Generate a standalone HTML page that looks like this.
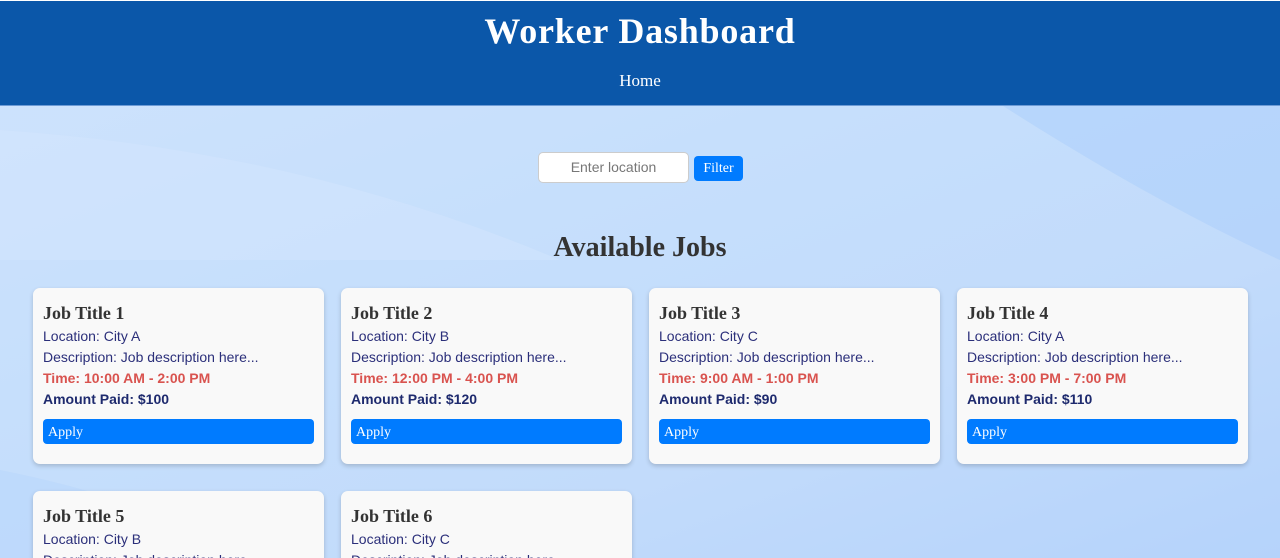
<!DOCTYPE html>
<html style="overflow:hidden;height:558px"><head><style>
body{margin:0;width:1280px;height:558px;overflow:hidden;font-family:"Liberation Serif",serif;background:linear-gradient(160deg,#cfe3fd 0%,#c6dffc 40%,#c2dbfb 70%,#b5d3fb 100%);position:relative}
.bgs{position:absolute;inset:0;z-index:0}
header{position:relative;z-index:1;background:#0b57a9;height:104px;border-top:1px solid #fff;border-bottom:1px solid #6d9bd6;text-align:center;color:#fff}
h1{margin:0;padding-top:10px;font-size:36px;letter-spacing:0.8px;line-height:40px;font-weight:bold}
.nav{position:absolute;top:70px;left:0;right:0;font-size:17px}
.filter{position:absolute;z-index:1;left:538px;top:152px}
.filter .in{position:absolute;left:0;top:0;width:151px;height:31px;background:#fff;border:1px solid #ccc;border-radius:5px;font-family:"Liberation Sans",sans-serif;font-size:14px;color:#777;text-align:center;line-height:29px;box-sizing:border-box}
.filter .btn{position:absolute;left:156px;top:4px;width:49px;height:25px;background:#007bff;border-radius:4px;color:#fff;font-size:14px;text-align:center;line-height:26px}
h2{position:absolute;z-index:1;top:231px;left:0;right:0;margin:0;text-align:center;font-size:28px;line-height:34px;color:#333}
.card{position:absolute;z-index:1;width:291px;height:176px;background:#f9f9f9;border-radius:7px;box-shadow:0 2px 5px rgba(0,0,0,.18);box-sizing:border-box;padding:0 10px}
.card h3{margin:14px 0 0;font-size:18px;line-height:22px;color:#333}
.card p{margin:0;font-family:"Liberation Sans",sans-serif;font-size:14px;line-height:21px;color:#2b2f7a}
.card p.loc{margin-top:2px}
.card .t{color:#d9534f;font-weight:bold}
.card .a{color:#1e2a6e;font-weight:bold}
.card .ap{margin-top:9px;height:25px;background:#007bff;border-radius:4px;color:#fff;font-size:14px;line-height:27px;padding-left:5px}
</style></head><body>
<svg class="bgs" width="1280" height="558"><path d="M0 130 Q300 150 560 260 L0 260Z" fill="#d3e6fd" opacity=".5"/><path d="M1000 104 Q1150 200 1280 260 L1280 104Z" fill="#a9cdfb" opacity=".5"/><path d="M0 470 Q150 500 250 558 L0 558Z" fill="#b8d6fb" opacity=".5"/></svg>
<header><h1>Worker Dashboard</h1><div class="nav">Home</div></header>
<div class="filter"><div class="in">Enter location</div><div class="btn">Filter</div></div>
<h2>Available Jobs</h2>
<div class="card" style="left:33px;top:288px"><h3>Job Title 1</h3><p class="loc">Location: City A</p><p>Description: Job description here...</p><p class="t">Time: 10:00 AM - 2:00 PM</p><p class="a">Amount Paid: $100</p><div class="ap">Apply</div></div>
<div class="card" style="left:341px;top:288px"><h3>Job Title 2</h3><p class="loc">Location: City B</p><p>Description: Job description here...</p><p class="t">Time: 12:00 PM - 4:00 PM</p><p class="a">Amount Paid: $120</p><div class="ap">Apply</div></div>
<div class="card" style="left:649px;top:288px"><h3>Job Title 3</h3><p class="loc">Location: City C</p><p>Description: Job description here...</p><p class="t">Time: 9:00 AM - 1:00 PM</p><p class="a">Amount Paid: $90</p><div class="ap">Apply</div></div>
<div class="card" style="left:957px;top:288px"><h3>Job Title 4</h3><p class="loc">Location: City A</p><p>Description: Job description here...</p><p class="t">Time: 3:00 PM - 7:00 PM</p><p class="a">Amount Paid: $110</p><div class="ap">Apply</div></div>
<div class="card" style="left:33px;top:491px"><h3>Job Title 5</h3><p class="loc">Location: City B</p><p>Description: Job description here...</p></div>
<div class="card" style="left:341px;top:491px"><h3>Job Title 6</h3><p class="loc">Location: City C</p><p>Description: Job description here...</p></div>
</body></html>
